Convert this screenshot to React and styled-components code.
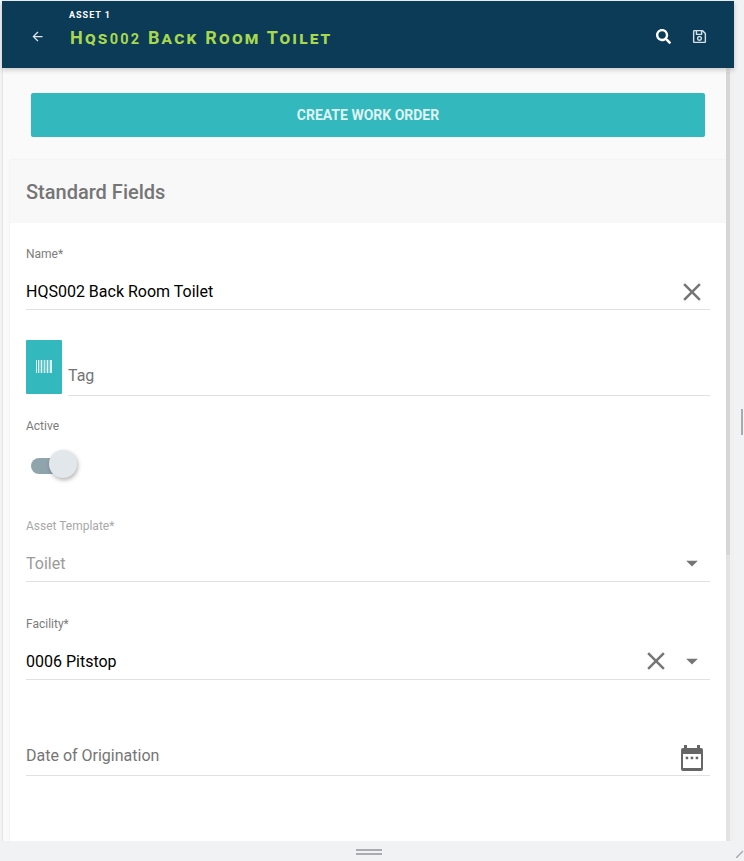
import React from "react";
import styled, { createGlobalStyle } from "styled-components";
import { FaSearch, FaRegSave } from "react-icons/fa";
import { MdArrowBack, MdClose, MdArrowDropDown } from "react-icons/md";

const GlobalStyle = createGlobalStyle`
  html, body {
    margin: 0;
    padding: 0;
    background: #f1f2f4;
    font-family: Roboto, "Liberation Sans", sans-serif;
  }
  * {
    box-sizing: border-box;
  }
`;

const Frame = styled.div`
  position: relative;
  width: 744px;
  height: 861px;
  display: flex;
  flex-direction: column;
  overflow: hidden;
  background: #f1f2f4;
`;

const Window = styled.div`
  height: 840px;
  margin: 1px 10px 0 2px;
  display: flex;
  flex-direction: column;
  background: #fafafa;
  border-left: 1px solid #e4e4e4;
`;

const Header = styled.header`
  height: 67px;
  margin-left: -1px;
  flex: none;
  display: flex;
  align-items: center;
  background: #0c3b57;
  box-shadow: 0 2px 5px rgba(0, 0, 0, 0.2);
  z-index: 1;
`;

const BackButton = styled.div`
  width: 67px;
  padding: 4px 0 0 28px;
  color: #dfe7ec;
  font-size: 15px;
  display: flex;
`;

const Titles = styled.div`
  flex: 1;
  display: flex;
  flex-direction: column;
  margin-top: -9px;
`;

const Eyebrow = styled.div`
  color: #fff;
  font-size: 9px;
  line-height: 11px;
  font-weight: 700;
  letter-spacing: 1px;
`;

const Title = styled.div`
  color: #a8d84e;
  font-size: 18px;
  line-height: 22px;
  margin: 6px 0 0 1px;
  font-weight: 700;
  font-variant: small-caps;
  letter-spacing: 2.2px;
`;

const Digits = styled.span`
  font-size: 14.5px;
`;

const HeaderIcons = styled.div`
  display: flex;
  align-items: center;
  gap: 21px;
  padding: 3px 27px 0 0;
  color: #fff;
`;

const Body = styled.div`
  flex: 1;
  min-height: 0;
  display: flex;
`;

const Main = styled.main`
  flex: 1;
  min-width: 0;
  padding: 25px 0 0 7px;
  overflow: hidden;
`;

const Track = styled.div`
  width: 8px;
  flex: none;
  padding-top: 4px;
  background: linear-gradient(to right, #e2e2e2 0 4px, #f0f0f0 4px);
`;

const Thumb = styled.div`
  width: 4px;
  height: 483px;
  background: #d6d6d6;
`;

const WorkOrderButton = styled.button`
  display: block;
  width: 674px;
  height: 44px;
  margin-left: 21px;
  border: none;
  border-radius: 2px;
  background: #33b8bd;
  color: #dff3f4;
  font-family: inherit;
  font-size: 14px;
  font-weight: 700;
`;

const Card = styled.section`
  margin-top: 23px;
  background: #fff;
  height: 700px;
  box-shadow: 0 0 2px rgba(0, 0, 0, 0.08);
`;

const CardHeader = styled.div`
  height: 63px;
  padding: 0 16px;
  display: flex;
  align-items: center;
  background: #f8f8f8;
  color: #757575;
  font-size: 20px;
  font-weight: 500;
`;

const Fields = styled.div`
  padding: 0 16px;
  display: flex;
  flex-direction: column;
`;

const Field = styled.div`
  height: ${(p) => p.$height}px;
  margin-top: ${(p) => p.$top}px;
  display: flex;
  flex-direction: column;
`;

const Label = styled.label`
  color: ${(p) => (p.$muted ? "#a8a8a8" : "#7c7c7c")};
  font-size: 12px;
  line-height: 14px;
`;

const InputRow = styled.div`
  flex: 1;
  display: flex;
  align-items: flex-end;
  border-bottom: 1px solid #e0e0e0;
  padding-bottom: ${(p) => p.$pad || 5}px;
`;

const Value = styled.div`
  flex: 1;
  font-size: 16px;
  line-height: 24px;
  color: ${(p) => p.$color || "#000"};
`;

const ClearIcon = styled(MdClose)`
  color: #757575;
  font-size: 30px;
  margin: 0 3px -3px 0;
  flex: none;
`;

const ClearInSelect = styled(ClearIcon)`
  margin: 0 7px -2px 0;
`;

const Caret = styled(MdArrowDropDown)`
  color: #757575;
  font-size: 28px;
  margin: 0 4px -1px 0;
  flex: none;
`;

const TagRow = styled.div`
  margin-top: 30px;
  height: 56px;
  display: flex;
  gap: 6px;
`;

const TagButton = styled.div`
  width: 36px;
  height: 54px;
  border-radius: 1px;
  background: #33b8bd;
  display: flex;
  align-items: center;
  justify-content: center;
  padding-bottom: 2px;
`;

const TagInput = styled.div`
  flex: 1;
  border-bottom: 1px solid #e0e0e0;
  display: flex;
  align-items: flex-end;
  padding-bottom: 7px;
  color: #757575;
  font-size: 16px;
  line-height: 24px;
`;

const ToggleRow = styled.div`
  margin-top: 18px;
  display: flex;
  align-items: center;
  padding-left: 5px;
  height: 30px;
`;

const SwitchTrack = styled.div`
  position: relative;
  width: 34px;
  height: 16px;
  border-radius: 8px;
  background: #90a4ae;
`;

const SwitchKnob = styled.div`
  position: absolute;
  top: -8px;
  right: -12px;
  width: 28px;
  height: 28px;
  border-radius: 50%;
  background: #e1e7eb;
  box-shadow: 1px 2px 4px rgba(0, 0, 0, 0.3);
`;

const CalendarGlyph = styled.svg`
  flex: none;
  margin: 0 7px -3px 0;
`;

const Resizer = styled.div`
  height: 20px;
  flex: none;
  display: flex;
  justify-content: center;
  align-items: center;
  padding: 1px 7px 0 0;
`;

const Grip = styled.div`
  width: 26px;
  height: 6px;
  border-top: 2px solid #a9abae;
  border-bottom: 2px solid #a9abae;
`;

const SideHandle = styled.div`
  position: absolute;
  top: 409px;
  right: 1px;
  width: 2px;
  height: 26px;
  background: #a9abae;
`;

const CornerGrip = styled.svg`
  position: absolute;
  right: 0;
  bottom: 3px;
`;

function BarcodeIcon() {
  const bars = [
    [0, 0.9],
    [2, 0.8],
    [3.5, 0.55],
    [5, 0.9],
    [6.5, 0.5],
    [8, 0.7],
    [9.5, 0.55],
    [11, 0.9],
    [12.5, 0.55],
    [14, 0.8],
    [15, 0.9],
  ];
  return (
    <svg width="16" height="13" viewBox="0 0 16 13">
      {bars.map(([x, o]) => (
        <rect key={x} x={x} y="0" width="1" height="13" fill="#fff" opacity={o} />
      ))}
    </svg>
  );
}

function CalendarIcon() {
  return (
    <CalendarGlyph width="22" height="26" viewBox="0 0 22 26">
      <path
        d="M3 0h3v3h10V0h3v3h1a2 2 0 0 1 2 2v19a2 2 0 0 1-2 2H2a2 2 0 0 1-2-2V5a2 2 0 0 1 2-2h1z"
        fill="#666"
      />
      <rect x="2" y="9" width="18" height="14" fill="#fff" />
      <rect x="4.700" y="11.700" width="2.500" height="2.500" fill="#666" />
      <rect x="9.700" y="11.700" width="2.500" height="2.500" fill="#666" />
      <rect x="14.700" y="11.700" width="2.500" height="2.500" fill="#666" />
    </CalendarGlyph>
  );
}

export default function App() {
  return (
    <Frame>
      <GlobalStyle />
      <Window>
        <Header>
          <BackButton>
            <MdArrowBack />
          </BackButton>
          <Titles>
            <Eyebrow>ASSET 1</Eyebrow>
            <Title>
              Hqs<Digits>002</Digits> Back Room Toilet
            </Title>
          </Titles>
          <HeaderIcons>
            <FaSearch size={15} />
            <FaRegSave size={15} color="#d5e0e6" />
          </HeaderIcons>
        </Header>
        <Body>
          <Main>
            <WorkOrderButton>CREATE WORK ORDER</WorkOrderButton>
            <Card>
              <CardHeader>Standard Fields</CardHeader>
              <Fields>
                <Field $top={24} $height={63}>
                  <Label>Name*</Label>
                  <InputRow>
                    <Value>HQS002 Back Room Toilet</Value>
                    <ClearIcon />
                  </InputRow>
                </Field>
                <TagRow>
                  <TagButton>
                    <BarcodeIcon />
                  </TagButton>
                  <TagInput>Tag</TagInput>
                </TagRow>
                <Field $top={23} $height={14}>
                  <Label>Active</Label>
                </Field>
                <ToggleRow>
                  <SwitchTrack>
                    <SwitchKnob />
                  </SwitchTrack>
                </ToggleRow>
                <Field $top={38} $height={63}>
                  <Label $muted>Asset Template*</Label>
                  <InputRow>
                    <Value $color="#9a9a9a">Toilet</Value>
                    <Caret />
                  </InputRow>
                </Field>
                <Field $top={35} $height={63}>
                  <Label>Facility*</Label>
                  <InputRow>
                    <Value>0006 Pitstop</Value>
                    <ClearInSelect />
                    <Caret />
                  </InputRow>
                </Field>
                <Field $top={58} $height={38}>
                  <InputRow $pad={7}>
                    <Value $color="#757575">Date of Origination</Value>
                    <CalendarIcon />
                  </InputRow>
                </Field>
              </Fields>
            </Card>
          </Main>
          <Track>
            <Thumb />
          </Track>
        </Body>
      </Window>
      <Resizer>
        <Grip />
      </Resizer>
      <SideHandle />
      <CornerGrip width="8" height="8" viewBox="0 0 8 8">
        <path d="M0 8 L7 1" stroke="#a9abae" strokeWidth="1.500" />
      </CornerGrip>
    </Frame>
  );
}
